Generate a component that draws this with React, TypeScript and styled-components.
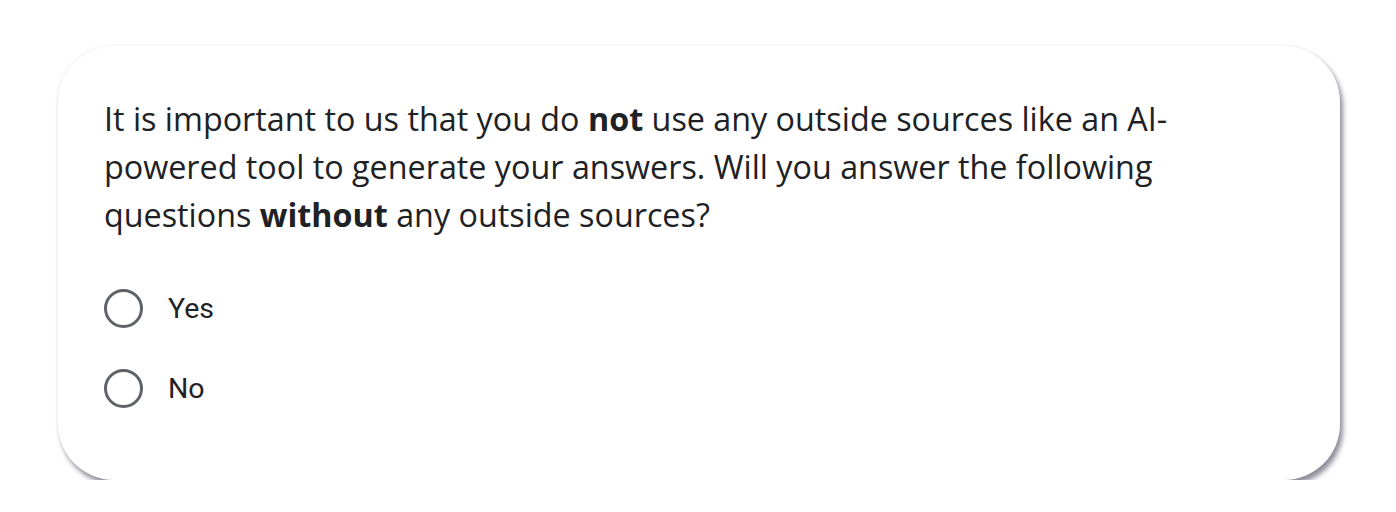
import styled, { createGlobalStyle } from 'styled-components';

const GlobalStyle = createGlobalStyle`
  body {
    margin: 0;
    background: #ffffff;
  }
`;

const Page = styled.div`
  padding: 46px 56px 0 58px;
`;

const Card = styled.div`
  background: #ffffff;
  border-radius: 56px;
  padding: 48px 46px 52px 46px;
  box-shadow: 3px 5px 5px rgba(60, 55, 80, 0.55), 0 0 4px rgba(0, 0, 0, 0.08);
  height: 434px;
  box-sizing: border-box;
`;

const Question = styled.p`
  margin: 0;
  font-family: "Open Sans", "Liberation Sans", sans-serif;
  font-size: 32.3px;
  line-height: 48px;
  color: #202124;
  max-width: 1110px;
`;

const Options = styled.div`
  display: flex;
  flex-direction: column;
  gap: 41px;
  margin-top: 51px;
`;

const Option = styled.label`
  display: flex;
  align-items: center;
  gap: 25px;
  font-family: Roboto, "Liberation Sans", sans-serif;
  font-size: 28.5px;
  line-height: 39px;
  color: #202124;
`;

const Radio = styled.span`
  width: 33px;
  height: 33px;
  border: 3px solid #5f6368;
  border-radius: 50%;
  flex-shrink: 0;
`;

export default function App() {
  return (
    <Page>
      <GlobalStyle />
      <Card>
        <Question>
          It is important to us that you do <b>not</b> use any outside sources like an AI-powered tool to generate
          your answers. Will you answer the following questions <b>without</b> any outside sources?
        </Question>
        <Options>
          <Option><Radio />Yes</Option>
          <Option><Radio />No</Option>
        </Options>
      </Card>
    </Page>
  );
}
